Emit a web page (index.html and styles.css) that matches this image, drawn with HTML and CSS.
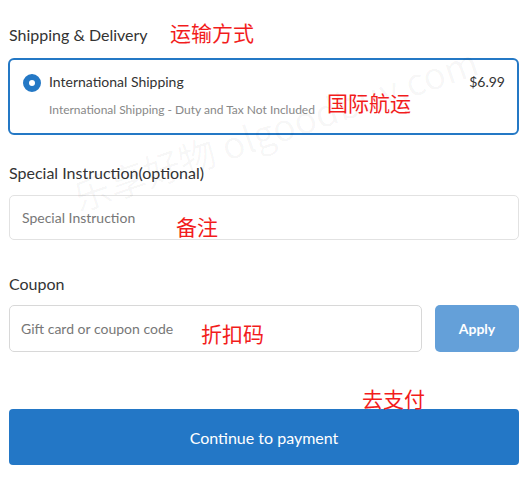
FILE: index.html
```html
<!DOCTYPE html>
<html lang="en">
  <head>
    <meta charset="UTF-8" />
    <meta name="viewport" content="width=device-width, initial-scale=1.0" />
    <title>Checkout</title>
    <link rel="stylesheet" href="styles.css">
  </head>
  <body>
    <main class="checkout">
      <section class="block block-shipping">
        <h2 class="block-title">Shipping &amp; Delivery</h2>
        <label class="ship-option">
          <span class="radio"></span>
          <span class="ship-text">
            <span class="ship-name">International Shipping</span>
            <span class="ship-desc">International Shipping - Duty and Tax Not Included</span>
          </span>
          <span class="ship-price">$6.99</span>
        </label>
      </section>

      <section class="block block-note">
        <h2 class="block-title">Special Instruction(optional)</h2>
        <input class="field" type="text" placeholder="Special Instruction" />
      </section>

      <section class="block block-coupon">
        <h2 class="block-title">Coupon</h2>
        <div class="coupon-row">
          <input class="field" type="text" placeholder="Gift card or coupon code" />
          <button class="btn-apply">Apply</button>
        </div>
      </section>

      <button class="btn-pay">Continue to payment</button>
    </main>

    <!-- annotations on top of the screenshot -->
    <div class="watermark">乐享好物 olgoodbuy.com</div>
    <div class="note note-ship">运输方式</div>
    <div class="note note-intl">国际航运</div>
    <div class="note note-remark">备注</div>
    <div class="note note-coupon">折扣码</div>
    <div class="note note-pay">去支付</div>
  </body>
</html>
```

FILE: styles.css
```css
body {
  margin: 0;
  font-family: Lato, "Noto Sans", sans-serif;
  color: #333;
  background: #fff;
  position: relative;
}
.checkout {
  padding: 25px 11px 0 9px;
}
.block {
  margin-bottom: 30px;
}
.block-title {
  font-size: 16px;
  font-weight: 400;
  margin: 0 0 12px;
  line-height: 20px;
  color: #333;
}
.block-shipping .block-title {
  margin-bottom: 13px;
}
.block-shipping {
  margin-bottom: 28px;
}
.block-note {
  margin-bottom: 34px;
}
.block-coupon .block-title {
  margin-bottom: 11px;
}
.ship-option {
  display: flex;
  align-items: flex-start;
  border: 2px solid #2478c5;
  border-radius: 6px;
  margin-left: -1px;
  padding: 12px 12px 15px 13px;
}
.radio {
  width: 18px;
  height: 18px;
  box-sizing: border-box;
  border-radius: 50%;
  background: #2478c5;
  border: 6px solid #2478c5;
  position: relative;
  margin-top: 2px;
  flex: none;
}
.radio::after {
  content: "";
  position: absolute;
  inset: 0;
  border-radius: 50%;
  background: #fff;
}
.ship-text {
  display: flex;
  flex-direction: column;
  flex: 1;
  margin-left: 8px;
}
.ship-name {
  font-size: 14px;
  line-height: 20px;
}
.ship-desc {
  font-size: 12px;
  color: #888;
  margin-top: 10px;
  line-height: 16px;
}
.ship-price {
  font-size: 14px;
  line-height: 20px;
}
.field {
  display: block;
  width: 100%;
  box-sizing: border-box;
  height: 45px;
  border: 1px solid #e2e2e2;
  border-radius: 5px;
  padding: 0 12px;
  font-family: inherit;
  font-size: 14px;
  color: #333;
}
.field::placeholder {
  color: #777;
}
.coupon-row {
  display: flex;
  gap: 13px;
}
.coupon-row .field {
  flex: 1;
  height: 47px;
  border-color: #d8d8d8;
  padding-left: 11px;
}
.btn-apply {
  width: 84px;
  height: 47px;
  flex: none;
  background: #64a0d9;
  color: #fff;
  border: none;
  border-radius: 5px;
  font-family: inherit;
  font-weight: 700;
  font-size: 14px;
}
.btn-pay {
  display: block;
  width: 100%;
  height: 56px;
  margin-top: 57px;
  background: #2377c6;
  color: #fff;
  border: none;
  border-radius: 4px;
  font-family: inherit;
  font-size: 16px;
}
.note {
  position: absolute;
  color: #f21c1c;
  font-family: "Noto Sans CJK SC", sans-serif;
  font-size: 21px;
  line-height: 24px;
}
.note-ship { left: 170px; top: 20px; }
.note-intl { left: 327px; top: 90px; }
.note-remark { left: 176px; top: 214px; }
.note-coupon { left: 201px; top: 321px; }
.note-pay { left: 362px; top: 386px; }
.watermark {
  position: absolute;
  left: 74px;
  top: 172px;
  font-family: "Noto Sans CJK SC", sans-serif;
  font-size: 37px;
  line-height: 50px;
  color: rgba(0, 0, 0, 0.035);
  transform: rotate(-19deg);
  transform-origin: left center;
  white-space: nowrap;
  pointer-events: none;
}
```
